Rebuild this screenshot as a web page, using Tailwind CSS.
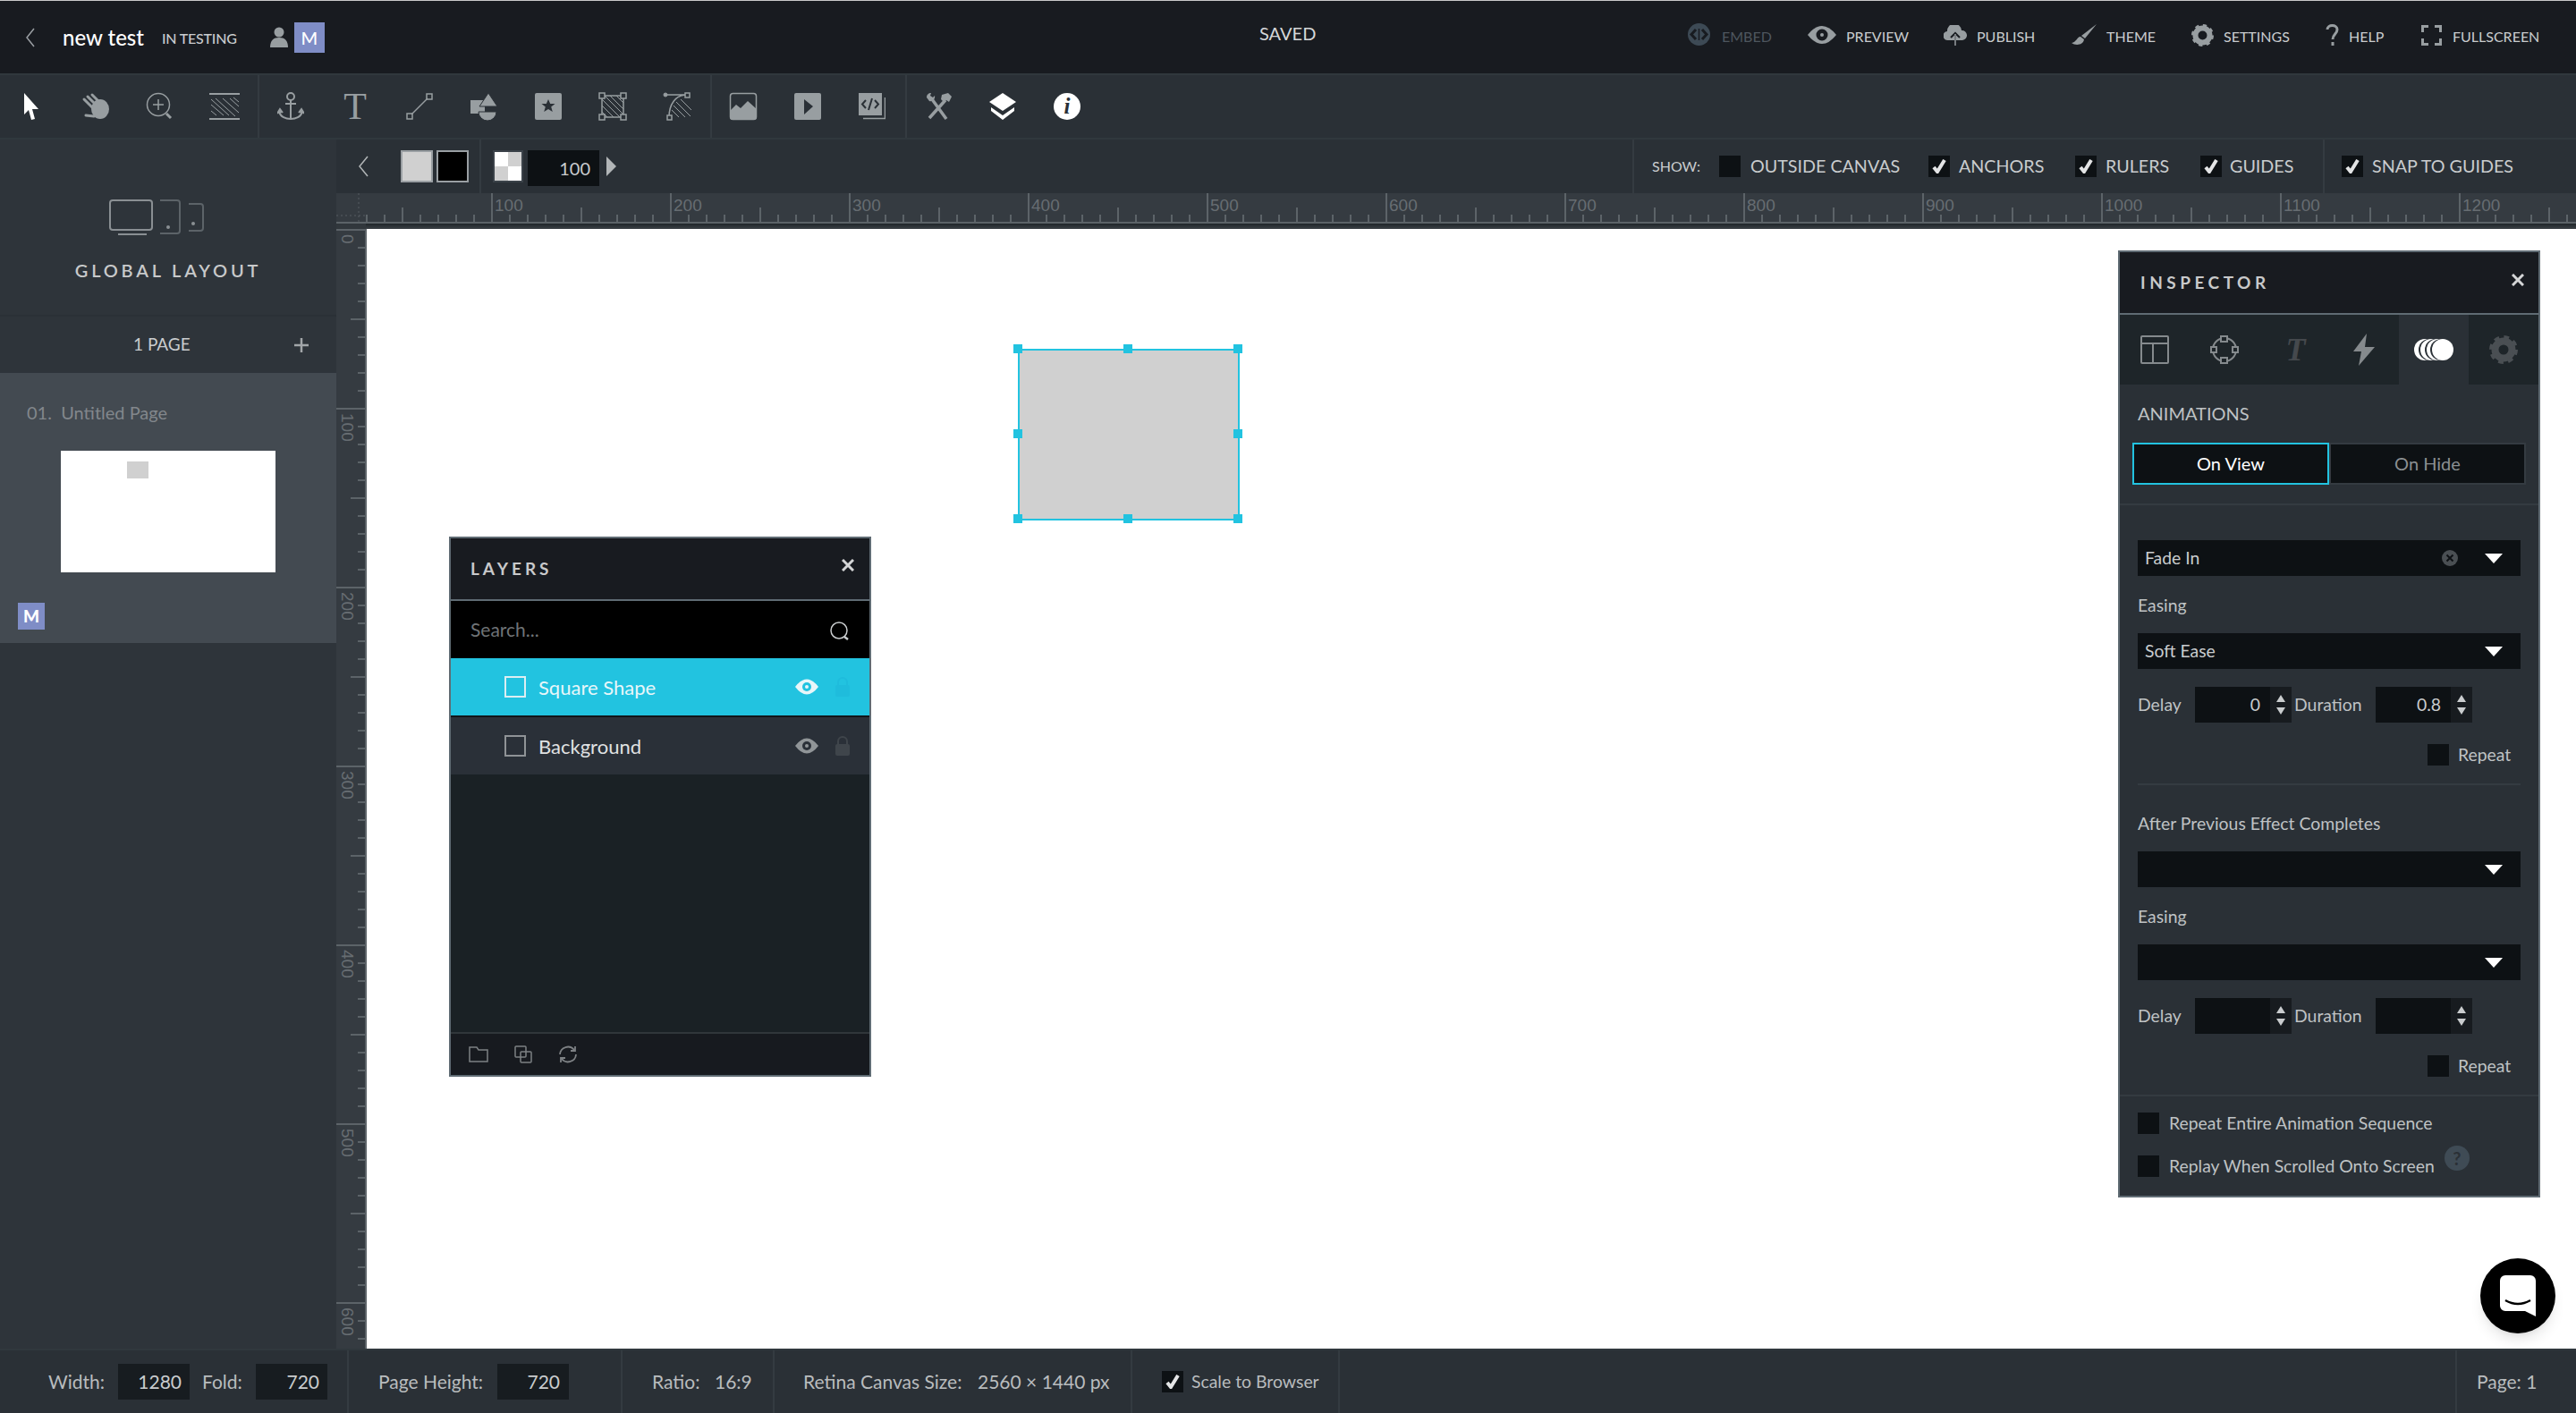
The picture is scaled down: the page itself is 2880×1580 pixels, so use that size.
<!DOCTYPE html>
<html lang="en">
<head>
  <meta charset="UTF-8">
  <title>new test</title>
  <script src="https://cdn.jsdelivr.net/npm/@tailwindcss/browser@4"></script>
</head>
<body class="bg-white">
<div class="flex h-[1580px] w-[2880px] flex-col overflow-hidden [font-family:Lato,sans-serif] text-[#c9ccce]">

  <!-- top bar -->
  <header class="flex h-[84px] shrink-0 items-center border-t border-b-2 border-t-[#c9c9c9] border-b-[#30383d] bg-[#181b20]">
    <div class="flex w-[1408px] items-center">
      <svg class="ml-[28px] h-[24px] w-[12px]" viewBox="0 0 12 24" fill="none" stroke="#9a9fa3" stroke-width="1.5"><path d="M10 2 2 12l8 10"/></svg>
      <span class="ml-[30px] text-[24px] font-medium text-white">new test</span>
      <span class="ml-[20px] mt-[3px] text-[16px] font-medium tracking-[-0.2px] text-[#c9ccce]">IN TESTING</span>
      <svg class="ml-[37px] h-[24px] w-[20px]" viewBox="0 0 20 24" fill="#989ea1"><circle cx="10" cy="6" r="5.5"/><path d="M0 23c0-8 4-11 10-11s10 3 10 11z"/></svg>
      <span class="ml-[7px] flex h-[34px] w-[34px] items-center justify-center bg-[#7f8dc6] text-[20px] font-medium text-white">M</span>
    </div>
    <div class="mb-[9px] w-[479px] text-[20px] text-[#d5d7d8]">SAVED</div>
    <div class="mb-[2px] flex items-center text-[16px]">
      <div class="flex w-[134px] items-center text-[#4e565e]">
        <svg class="mb-[5px] mr-[13px] h-[25px] w-[25px]" viewBox="0 0 25 25"><circle cx="12.5" cy="12.5" r="12.5" fill="#3d4a55"/><path d="M9 7 4 12.5 9 18M16 7l5 5.5-5 5.5" fill="none" stroke="#181b20" stroke-width="3"/><path d="M12.5 6v13" stroke="#181b20" stroke-width="1.5"/></svg>
        <span>EMBED</span>
      </div>
      <div class="flex w-[152px] items-center">
        <svg class="mb-[3px] mr-[11px] h-[20px] w-[32px]" viewBox="0 0 32 20"><path d="M0 10Q16-10 32 10 16 30 0 10z" fill="#989ea1"/><circle cx="16" cy="10" r="6.5" fill="#181b20"/><circle cx="16" cy="10" r="2" fill="#989ea1"/></svg>
        <span>PREVIEW</span>
      </div>
      <div class="flex w-[142px] items-center">
        <svg class="mb-[3px] mr-[11px] h-[23px] w-[26px]" viewBox="0 0 26 23"><path d="M5 17a5 5 0 0 1-1-10 8 8 0 0 1 16-1 5.500 5.500 0 0 1 1 11z" fill="#989ea1"/><path d="M13 23V10M8 14l5-5 5 5" fill="none" stroke="#181b20" stroke-width="2"/><path d="M13 23V10" stroke="#989ea1" stroke-width="1.500"/></svg>
        <span>PUBLISH</span>
      </div>
      <div class="flex w-[135px] items-center">
        <svg class="mb-[3px] mr-[10px] h-[24px] w-[30px]" viewBox="0 0 30 24" fill="#989ea1"><path d="M29 0 12 13l4 3z"/><path d="M11 14c-4 0-4 6-10 7 4 3 13 3 14-4z"/></svg>
        <span>THEME</span>
      </div>
      <div class="flex w-[150px] items-center">
        <svg class="mb-[3px] mr-[11px] h-[25px] w-[25px]" viewBox="0 0 25 25"><circle cx="12.500" cy="12.500" r="8" fill="none" stroke="#989ea1" stroke-width="6"/><circle cx="12.500" cy="12.500" r="10.500" fill="none" stroke="#989ea1" stroke-width="4" stroke-dasharray="4 4.250"/></svg>
        <span>SETTINGS</span>
      </div>
      <div class="flex w-[107px] items-center">
        <svg class="mb-[3px] mr-[11px] h-[24px] w-[15px]" viewBox="0 0 15 24" fill="none" stroke="#989ea1" stroke-width="3"><path d="M2 6c0-6 11-6 11 0 0 5-5 5-5 11"/><path d="M8 20v4"/></svg>
        <span>HELP</span>
      </div>
      <div class="flex items-center">
        <svg class="mb-[3px] mr-[12px] h-[23px] w-[23px]" viewBox="0 0 23 23" fill="none" stroke="#989ea1" stroke-width="3"><path d="M1.500 8V1.500H8M15 1.500h6.500V8M21.500 15v6.500H15M8 21.500H1.500V15"/></svg>
        <span>FULLSCREEN</span>
      </div>
    </div>
  </header>

  <!-- tools -->
  <div class="flex h-[72px] shrink-0 border-b-2 border-[#30383d] bg-[#2a3036]">
    <div class="flex items-center border-r-2 border-[#343b41] [&>div]:pr-[2px]">
      <div class="flex w-[72px] justify-center"><svg class="h-[32px] w-[20px]" viewBox="0 0 20 32" fill="#fff"><path d="M2 1 18 19h-7l3 11-4 1-3-11-5 5z"/></svg></div>
      <div class="flex w-[72px] justify-center"><svg class="h-[32px] w-[32px]" viewBox="0 0 32 32" fill="#989ea1" stroke="#989ea1"><ellipse cx="21" cy="19" rx="10" ry="11" stroke="none"/><path d="M3 8l9 9M7 5l9 9M12 3l8 8M5 26l9 1" stroke-width="3" stroke-linecap="round"/></svg></div>
      <div class="flex w-[72px] justify-center"><svg class="h-[32px] w-[32px]" viewBox="0 0 32 32" fill="none" stroke="#989ea1"><circle cx="14" cy="14" r="12.500" stroke-width="1.500"/><path d="M14 8v12M8 14h12" stroke-width="1.500"/><path d="M23 24l5 5" stroke-width="3"/></svg></div>
      <div class="flex w-[72px] justify-center"><svg class="h-[32px] w-[36px]" viewBox="0 0 36 32" fill="none" stroke="#989ea1"><path d="M1 2h34M1 30h34" stroke-width="2"/><path d="M3 8l20 18M8 7l22 20M16 7l18 16M24 7l10 9M28 6l6 5M3 14l14 12M3 21l6 5" stroke-width="1"/></svg></div>
    </div>
    <div class="flex items-center border-r-2 border-[#343b41] [&>div]:pr-[2px]">
      <div class="flex w-[72px] justify-center"><svg class="h-[32px] w-[30px]" viewBox="0 0 30 32" fill="none" stroke="#989ea1" stroke-width="2"><circle cx="15" cy="5" r="4"/><path d="M15 9v21M9 13h12M2 21c1 7 8 9 13 9s12-2 13-9"/><path d="M0 24l3-5 3 4M24 23l3-4 3 5" fill="#989ea1"/></svg></div>
      <div class="flex w-[72px] justify-center"><span class="text-[42px] leading-[32px] text-[#989ea1] [font-family:'Liberation_Serif',serif]">T</span></div>
      <div class="flex w-[72px] justify-center"><svg class="h-[32px] w-[32px]" viewBox="0 0 32 32" fill="none" stroke="#989ea1" stroke-width="1.500"><path d="M7 25 25 7"/><rect x="2" y="24" width="6" height="6"/><rect x="24" y="2" width="6" height="6"/></svg></div>
      <div class="flex w-[72px] justify-center"><svg class="h-[32px] w-[32px]" viewBox="0 0 32 32"><rect x="1" y="9" width="16" height="15" fill="#989ea1"/><path d="M10 22a10 10 0 0 0 20 0z" fill="#989ea1" stroke="#2a3036"/><path d="M21 1l10 15H11z" fill="#989ea1" stroke="#2a3036"/></svg></div>
      <div class="flex w-[72px] justify-center"><svg class="h-[32px] w-[30px]" viewBox="0 0 30 32"><rect y="1" width="30" height="30" rx="2" fill="#989ea1"/><path d="M15 8l2.200 5h5.300l-4.300 3.500 1.600 5.500-4.800-3-4.800 3 1.600-5.500-4.300-3.500h5.300z" fill="#2a3036"/></svg></div>
      <div class="flex w-[72px] justify-center"><svg class="h-[32px] w-[32px]" viewBox="0 0 32 32" fill="none" stroke="#989ea1"><rect x="4" y="4" width="24" height="24" stroke-width="1.500"/><path d="M7 4l21 21M13 4l15 15M20 4l8 8M4 8l20 20M4 15l13 13M4 22l6 6"/><g fill="#2a3036" stroke-width="1.500"><rect x="1" y="1" width="6" height="6"/><rect x="25" y="1" width="6" height="6"/><rect x="1" y="25" width="6" height="6"/><rect x="25" y="25" width="6" height="6"/></g></svg></div>
      <div class="flex w-[72px] justify-center"><svg class="h-[32px] w-[32px]" viewBox="0 0 32 32" fill="none" stroke="#989ea1"><path d="M3 3h24M7 28C7 14 14 3 27 3" stroke-width="1.500"/><path d="M20 8l12 12M15 11l16 16M12 15l13 13M10 20l8 8" /><circle cx="3" cy="3" r="2" fill="#989ea1"/><rect x="25" y="1" width="5" height="5" fill="#2a3036" stroke-width="1.500"/><rect x="5" y="26" width="5" height="5" fill="#2a3036" stroke-width="1.500"/></svg></div>
    </div>
    <div class="flex items-center border-r-2 border-[#343b41] [&>div]:pr-[2px]">
      <div class="flex w-[72px] justify-center"><svg class="h-[32px] w-[32px]" viewBox="0 0 32 32"><rect x="1.500" y="1.500" width="29" height="29" rx="3" fill="none" stroke="#989ea1" stroke-width="1.500"/><path d="M1 21l7-7 5 4 8-8 10 9v9a3 3 0 0 1-3 3H4a3 3 0 0 1-3-3z" fill="#989ea1"/></svg></div>
      <div class="flex w-[72px] justify-center"><svg class="h-[32px] w-[30px]" viewBox="0 0 30 32"><rect y="1" width="30" height="30" rx="2" fill="#989ea1"/><path d="M11 8l10 8-10 9z" fill="#2a3036"/></svg></div>
      <div class="flex w-[72px] justify-center"><svg class="h-[32px] w-[30px]" viewBox="0 0 30 32"><path d="M5 29.500h24.500V6" fill="none" stroke="#989ea1" stroke-width="1.500"/><rect y="1" width="26" height="25" fill="#989ea1"/><path d="M8 9l-4 4.500 4 4.500M18 9l4 4.500-4 4.500M15 7l-4 13" fill="none" stroke="#2a3036" stroke-width="2"/></svg></div>
    </div>
    <div class="flex items-center [&>div]:pr-[2px]">
      <div class="flex w-[72px] justify-center"><svg class="h-[32px] w-[32px]" viewBox="0 0 32 32" fill="#989ea1" stroke="#989ea1"><path d="M9 8l16 22M24 9 6 29" stroke-width="3.500" fill="none"/><path d="M3 6c0-3 2-5 5-5l-1 3 3 2 2-2c1 4-3 7-6 6z" stroke="none"/><path d="M20 3l7-2 4 4-3 6-3-2-3 2-3-3z" stroke="none"/></svg></div>
      <div class="flex w-[72px] justify-center"><svg class="h-[32px] w-[32px]" viewBox="0 0 32 32" fill="#fff"><path d="M16 1 31 11 16 21 1 11z"/><path d="M3 17l13 9 13-9v4L16 31 3 21z"/></svg></div>
      <div class="flex w-[72px] justify-center"><span class="flex h-[30px] w-[30px] items-center justify-center rounded-full bg-white text-[25px] font-bold italic text-[#2a3036] [font-family:'Liberation_Serif',serif]">i</span></div>
    </div>
  </div>

  <div class="flex min-h-0 flex-1">
    <!-- pages sidebar -->
    <aside class="w-[376px] shrink-0 bg-[#2e343a]">
      <div class="flex h-[198px] flex-col items-center border-b-2 border-[#2a3036] pt-[67px]">
        <svg class="ml-[-26px] h-[42px] w-[106px]" viewBox="0 0 106 42" fill="none"><rect x="1" y="1" width="47" height="33" rx="3" stroke="#8a8f93" stroke-width="2"/><path d="M10 39h32" stroke="#8a8f93" stroke-width="2"/><path d="M57 1h19a3 3 0 0 1 3 3v31a3 3 0 0 1-3 3H57" stroke="#5c6368" stroke-width="2"/><circle cx="66" cy="31" r="2" fill="#8a8f93"/><path d="M89 5h13a3 3 0 0 1 3 3v24a3 3 0 0 1-3 3H89" stroke="#5c6368" stroke-width="2"/><circle cx="94" cy="27" r="2" fill="#8a8f93"/></svg>
        <div class="mt-[25px] text-[20px] font-semibold leading-[24px] tracking-[3.800px] text-[#c8c9ca]">GLOBAL LAYOUT</div>
      </div>
      <div class="flex h-[63px] items-center">
        <span class="ml-[149px] text-[19px] text-[#c9ccce]">1 PAGE</span>
        <svg class="ml-[116px] h-[16px] w-[16px]" viewBox="0 0 16 16" stroke="#a2a6a9" stroke-width="2.500"><path d="M8 0v16M0 8h16"/></svg>
      </div>
      <div class="h-[302px] bg-[#434a51] pt-[32px]">
        <div class="ml-[30px] text-[20px] leading-[24px] text-[#82878c]">01.&nbsp; Untitled Page</div>
        <div class="ml-[68px] mt-[31px] h-[136px] w-[240px] bg-white pl-[74px] pt-[12px]"><div class="h-[19px] w-[24px] bg-[#d0d0d0]"></div></div>
        <div class="ml-[20px] mt-[34px] flex h-[30px] w-[30px] items-center justify-center bg-[#7f8dc6] text-[19px] font-black text-white">M</div>
      </div>
    </aside>

    <div class="flex min-w-0 flex-1 flex-col">
      <!-- sub toolbar -->
      <div class="flex h-[60px] shrink-0 items-center bg-[#2a3036] text-[19.700px]">
        <div class="flex h-full w-[162px] items-center border-r-2 border-[#343b41]">
          <svg class="ml-[24px] h-[24px] w-[12px]" viewBox="0 0 12 24" fill="none" stroke="#b2b6b8" stroke-width="1.500"><path d="M11 1 2 12l9 11"/></svg>
          <div class="ml-[36px] h-[36px] w-[36px] border-2 border-[#9a9fa3] bg-[#d0d0d0]"></div>
          <div class="ml-[4px] h-[36px] w-[36px] border-2 border-[#9a9fa3] bg-black"></div>
        </div>
        <div class="ml-[13px] grid h-[36px] w-[34px] grid-cols-2 grid-rows-2 border-2 border-[#3b4249]">
          <div class="bg-white"></div><div class="bg-[#d0d0d0]"></div><div class="bg-[#d0d0d0]"></div><div class="bg-white"></div>
        </div>
        <div class="ml-[5px] mt-[4px] flex h-[40px] w-[80px] items-center justify-end bg-[#0d1114] pr-[10px] text-[20px] text-[#c9ccce]">100</div>
        <svg class="ml-[8px] h-[22px] w-[11px]" viewBox="0 0 11 22" fill="#b2b6b8"><path d="M0 0l11 11L0 22z"/></svg>
        <div class="ml-[1136px] flex h-full w-[772px] items-center border-l-2 border-[#343b41] pl-[20px]">
          <span class="w-[75px] text-[16px]">SHOW:</span>
          <div class="flex w-[234px] items-center gap-[11px]"><span class="h-[24px] w-[24px] bg-[#0d1114]"></span><span>OUTSIDE CANVAS</span></div>
          <div class="flex w-[164px] items-center gap-[10px]"><span class="flex h-[24px] w-[24px] items-center justify-center bg-[#0d1114]"><svg class="h-[16px] w-[16px]" viewBox="0 0 16 16" fill="none" stroke="#e3e4e5" stroke-width="4"><path d="M2 9l4 5 8-13"/></svg></span><span>ANCHORS</span></div>
          <div class="flex w-[140px] items-center gap-[10px]"><span class="flex h-[24px] w-[24px] items-center justify-center bg-[#0d1114]"><svg class="h-[16px] w-[16px]" viewBox="0 0 16 16" fill="none" stroke="#e3e4e5" stroke-width="4"><path d="M2 9l4 5 8-13"/></svg></span><span>RULERS</span></div>
          <div class="flex items-center gap-[9px]"><span class="flex h-[24px] w-[24px] items-center justify-center bg-[#0d1114]"><svg class="h-[16px] w-[16px]" viewBox="0 0 16 16" fill="none" stroke="#e3e4e5" stroke-width="4"><path d="M2 9l4 5 8-13"/></svg></span><span>GUIDES</span></div>
        </div>
        <div class="flex h-full flex-1 items-center gap-[10px] border-l-2 border-[#343b41] pl-[19px]"><span class="flex h-[24px] w-[24px] items-center justify-center bg-[#0d1114]"><svg class="h-[16px] w-[16px]" viewBox="0 0 16 16" fill="none" stroke="#e3e4e5" stroke-width="4"><path d="M2 9l4 5 8-13"/></svg></span><span>SNAP TO GUIDES</span></div>
      </div>

      <!-- top ruler -->
      <svg class="block h-[34px] w-[2504px] shrink-0" viewBox="0 0 2504 34" font-family="Liberation Sans" font-size="19" fill="#676d72">
        <defs>
          <pattern id="hticks" width="200" height="34" patternUnits="userSpaceOnUse" patternTransform="translate(173 0)">
            <path d="M1 0v34M21 24v10M41 24v10M61 24v10M81 24v10M101 16v18M121 24v10M141 24v10M161 24v10M181 24v10" stroke="#5c6368" stroke-width="2"/>
          </pattern>
        </defs>
        <rect width="2504" height="34" fill="#353b41"/>
        <rect x="33" width="2471" height="34" fill="url(#hticks)"/>
        <path d="M0 33h2504" stroke="#5c6368" stroke-width="2"/>
        <path d="M0 25h32M25 0v32" stroke="#565d62" stroke-width="1" stroke-dasharray="2 3"/>
        <text x="177" y="20">100</text><text x="377" y="20">200</text><text x="577" y="20">300</text><text x="777" y="20">400</text><text x="977" y="20">500</text><text x="1177" y="20">600</text><text x="1377" y="20">700</text><text x="1577" y="20">800</text><text x="1777" y="20">900</text><text x="1977" y="20">1000</text><text x="2177" y="20">1100</text><text x="2377" y="20">1200</text>
      </svg>
      <div class="flex h-[6px] shrink-0 bg-linear-to-b from-[#20262a] to-[#3a4045]"><div class="w-[33px] bg-[#31373c]"></div></div>

      <div class="flex min-h-0 flex-1">
        <!-- left ruler -->
        <svg class="block h-[1252px] w-[34px] shrink-0" viewBox="0 0 34 1252" font-family="Liberation Sans" font-size="19" fill="#676d72">
          <defs>
            <pattern id="vticks" width="34" height="200" patternUnits="userSpaceOnUse">
              <path d="M0 1h33M24 21h9M24 41h9M24 61h9M24 81h9M16 101h17M24 121h9M24 141h9M24 161h9M24 181h9" stroke="#5c6368" stroke-width="2"/>
            </pattern>
          </defs>
          <rect width="34" height="1252" fill="#353b41"/>
          <rect width="34" height="1252" fill="url(#vticks)"/>
          <path d="M33 0v1252" stroke="#5c6368" stroke-width="2"/>
          <text transform="translate(6 6) rotate(90)">0</text><text transform="translate(6 206) rotate(90)">100</text><text transform="translate(6 406) rotate(90)">200</text><text transform="translate(6 606) rotate(90)">300</text><text transform="translate(6 806) rotate(90)">400</text><text transform="translate(6 1006) rotate(90)">500</text><text transform="translate(6 1206) rotate(90)">600</text>
        </svg>

        <!-- canvas -->
        <main class="relative min-w-0 flex-1 bg-white">
          <!-- selected shape -->
          <div class="absolute left-[728px] top-[134px] h-[192px] w-[248px] border-2 border-[#22c3e0] bg-[#d0d0d0]">
            <span class="absolute left-[-7px] top-[-7px] h-[10px] w-[10px] bg-[#22c3e0]"></span>
            <span class="absolute left-[116px] top-[-7px] h-[10px] w-[10px] bg-[#22c3e0]"></span>
            <span class="absolute right-[-5px] top-[-7px] h-[10px] w-[10px] bg-[#22c3e0]"></span>
            <span class="absolute left-[-7px] top-[88px] h-[10px] w-[10px] bg-[#22c3e0]"></span>
            <span class="absolute right-[-5px] top-[88px] h-[10px] w-[10px] bg-[#22c3e0]"></span>
            <span class="absolute bottom-[-5px] left-[-7px] h-[10px] w-[10px] bg-[#22c3e0]"></span>
            <span class="absolute bottom-[-5px] left-[116px] h-[10px] w-[10px] bg-[#22c3e0]"></span>
            <span class="absolute bottom-[-5px] right-[-5px] h-[10px] w-[10px] bg-[#22c3e0]"></span>
          </div>

          <!-- layers window -->
          <section class="absolute left-[92px] top-[344px] flex h-[604px] w-[472px] flex-col border-2 border-[#5f6b73] bg-[#1a2125]">
            <div class="flex h-[70px] shrink-0 items-center justify-between border-b-2 border-[#5f6b73] bg-[#181b20] pl-[22px] pr-[17px]">
              <span class="text-[19px] font-bold tracking-[4px] text-[#c8c9ca]">LAYERS</span>
              <svg class="mb-[8px] h-[14px] w-[14px]" viewBox="0 0 14 14" stroke="#d4d5d6" stroke-width="3"><path d="M1 1l12 12M13 1 1 13"/></svg>
            </div>
            <div class="flex h-[64px] shrink-0 items-center justify-between bg-black pl-[22px] pr-[22px]">
              <span class="text-[21px] text-[#6f7376]">Search...</span>
              <svg class="mt-[4px] h-[22px] w-[22px]" viewBox="0 0 22 22" fill="none" stroke="#c9ccce" stroke-width="1.500"><circle cx="10" cy="10" r="9"/><path d="M16 17l4 3" stroke-width="2.500"/></svg>
            </div>
            <div class="flex h-[64px] shrink-0 items-center bg-[#22c3e0]">
              <span class="ml-[60px] h-[24px] w-[24px] border-2 border-[#dceef2]"></span>
              <span class="ml-[14px] w-[287px] text-[22px] text-[#e8f6f9]">Square Shape</span>
              <svg class="h-[18px] w-[26px]" viewBox="0 0 26 18"><path d="M0 9Q13-8 26 9 13 26 0 9z" fill="#e8f6f9"/><circle cx="13" cy="9" r="5" fill="#22c3e0"/><circle cx="13" cy="9" r="2" fill="#e8f6f9"/></svg>
              <svg class="ml-[19px] h-[22px] w-[16px]" viewBox="0 0 16 22" fill="#1fbcdc"><rect y="9" width="16" height="13" rx="2"/><path d="M3 10V6a5 5 0 0 1 10 0v4" fill="none" stroke="#1fbcdc" stroke-width="2"/></svg>
            </div>
            <div class="h-[2px] shrink-0 bg-[#10151a]"></div>
            <div class="flex h-[64px] shrink-0 items-center bg-[#2a3038]">
              <span class="ml-[60px] h-[24px] w-[24px] border-2 border-[#8f9396]"></span>
              <span class="ml-[14px] w-[287px] text-[22px] text-[#e0e2e3]">Background</span>
              <svg class="h-[18px] w-[26px]" viewBox="0 0 26 18"><path d="M0 9Q13-8 26 9 13 26 0 9z" fill="#909598"/><circle cx="13" cy="9" r="5" fill="#2a3038"/><circle cx="13" cy="9" r="2" fill="#909598"/></svg>
              <svg class="ml-[19px] h-[22px] w-[16px]" viewBox="0 0 16 22" fill="#3f454b"><rect y="9" width="16" height="13" rx="2"/><path d="M3 10V6a5 5 0 0 1 10 0v4" fill="none" stroke="#3f454b" stroke-width="2"/></svg>
            </div>
            <div class="flex-1"></div>
            <div class="flex h-[48px] shrink-0 items-center gap-[29px] border-t-2 border-[#30363a] bg-[#171a1f] pl-[20px]">
              <svg class="h-[18px] w-[22px]" viewBox="0 0 22 18" fill="none" stroke="#7d8184" stroke-width="1.500"><path d="M1 16.500V1h8l2 3h10v13H1z"/></svg>
              <svg class="h-[20px] w-[20px]" viewBox="0 0 20 20" fill="none" stroke="#7d8184" stroke-width="1.500"><rect x="1" y="1" width="12" height="12" rx="1"/><rect x="7" y="7" width="12" height="12" rx="1"/></svg>
              <svg class="h-[20px] w-[22px]" viewBox="0 0 22 20" fill="none" stroke="#7d8184" stroke-width="1.800"><path d="M2 10a9 9 0 0 1 16-5M20 10a9 9 0 0 1-16 5"/><path d="M19 1v5h-5M3 19v-5h5"/></svg>
            </div>
          </section>

          <!-- inspector window -->
          <section class="absolute left-[1958px] top-[24px] h-[1059px] w-[472px] border-2 border-[#5f6b73] bg-[#2a3036] text-[19.400px] text-[#bfc2c4]">
            <div class="flex h-[70px] items-center justify-between border-b-2 border-[#5f6b73] bg-[#181b20] pl-[23px] pr-[16px]">
              <span class="text-[19px] font-bold tracking-[4.500px] text-[#c8c9ca]">INSPECTOR</span>
              <svg class="mb-[6px] h-[14px] w-[14px]" viewBox="0 0 14 14" stroke="#d4d5d6" stroke-width="3"><path d="M1 1l12 12M13 1 1 13"/></svg>
            </div>
            <div class="flex h-[78px] items-center bg-[#1e2529]">
              <div class="flex w-[78px] justify-center"><svg class="h-[32px] w-[32px]" viewBox="0 0 32 32" fill="none" stroke="#858a8d" stroke-width="2"><rect x="1" y="1" width="30" height="30" rx="1"/><path d="M1 9h30M14 9v22"/></svg></div>
              <div class="flex w-[78px] justify-center"><svg class="h-[32px] w-[32px]" viewBox="0 0 32 32" fill="none" stroke="#858a8d" stroke-width="2"><circle cx="16" cy="16" r="13"/><g fill="#1e2529"><rect x="12" y="1" width="7" height="6"/><rect x="12" y="25" width="7" height="6"/><rect x="1" y="13" width="6" height="6"/><rect x="25" y="13" width="6" height="6"/></g></svg></div>
              <div class="flex w-[78px] justify-center"><span class="pl-[3px] text-[36px] font-bold italic leading-[32px] text-[#45494d] [font-family:'Liberation_Serif',serif]">T</span></div>
              <div class="flex w-[78px] justify-center"><svg class="h-[36px] w-[24px]" viewBox="0 0 24 36" fill="#858a8d"><path d="M15 0 0 20h9l-3 16 18-21H13z"/></svg></div>
              <div class="flex h-full w-[78px] items-center justify-center bg-[#2a3036]"><svg class="h-[24px] w-[44px]" viewBox="0 0 44 24"><circle cx="12" cy="12" r="12" fill="#fff"/><circle cx="17" cy="12" r="12" fill="#2a3036"/><circle cx="19" cy="12" r="12" fill="#fff"/><circle cx="24" cy="12" r="12" fill="#2a3036"/><circle cx="26" cy="12" r="12" fill="#fff"/><circle cx="30" cy="12" r="12" fill="#2a3036"/><circle cx="32" cy="12" r="12" fill="#fff"/></svg></div>
              <div class="flex w-[78px] justify-center"><svg class="h-[32px] w-[32px]" viewBox="0 0 32 32"><circle cx="16" cy="16" r="9.500" fill="none" stroke="#4a4f53" stroke-width="8"/><circle cx="16" cy="16" r="13.500" fill="none" stroke="#4a4f53" stroke-width="5" stroke-dasharray="5.500 5.100"/></svg></div>
            </div>
            <div class="ml-[20px] mt-[20px] h-[24px] leading-[24px] text-[20px]">ANIMATIONS</div>
            <div class="ml-[14px] mt-[21px] flex h-[47px] w-[440px]">
              <div class="flex w-[220px] items-center justify-center border-2 border-[#22c3e0] bg-[#0d1114] pb-[2px] text-[20px] text-white">On View</div>
              <div class="flex w-[220px] items-center justify-center border-2 border-[#343b41] bg-[#0d1114] pb-[2px] text-[20px] text-[#8b8f92]">On Hide</div>
            </div>
            <div class="mt-[21px] h-[2px] bg-[#343b41]"></div>
            <div class="ml-[20px] mt-[39px] flex h-[40px] w-[428px] items-center bg-[#0d1114] pl-[8px] pr-[20px] text-[#c9ccce]">
              <span class="flex-1">Fade In</span>
              <svg class="mr-[30px] h-[18px] w-[18px]" viewBox="0 0 18 18"><circle cx="9" cy="9" r="9" fill="#4a4f53"/><path d="M5.500 5.500l7 7M12.500 5.500l-7 7" stroke="#0d1114" stroke-width="2"/></svg>
              <svg class="h-[11px] w-[20px]" viewBox="0 0 20 11" fill="#fff"><path d="M0 0h20L10 11z"/></svg>
            </div>
            <div class="ml-[20px] mt-[21px] h-[24px] leading-[24px]">Easing</div>
            <div class="ml-[20px] mt-[19px] flex h-[40px] w-[428px] items-center bg-[#0d1114] pl-[8px] pr-[20px] text-[#c9ccce]">
              <span class="flex-1">Soft Ease</span>
              <svg class="h-[11px] w-[20px]" viewBox="0 0 20 11" fill="#fff"><path d="M0 0h20L10 11z"/></svg>
            </div>
            <div class="ml-[20px] mt-[20px] flex h-[40px] items-center">
              <span class="w-[64px]">Delay</span>
              <div class="flex h-full w-[108px] bg-[#0d1114]"><span class="flex w-[84px] items-center justify-end pr-[11px] text-[#c9ccce]">0</span><span class="flex w-[24px] flex-col items-center justify-center gap-[6px] bg-[#171b1f]"><svg class="h-[8px] w-[10px]" viewBox="0 0 10 8" fill="#c9ccce"><path d="M5 0l5 8H0z"/></svg><svg class="h-[8px] w-[10px]" viewBox="0 0 10 8" fill="#c9ccce"><path d="M0 0h10L5 8z"/></svg></span></div>
              <span class="ml-[3px] w-[91px]">Duration</span>
              <div class="flex h-full w-[108px] bg-[#0d1114]"><span class="flex w-[84px] items-center justify-end pr-[11px] text-[#c9ccce]">0.8</span><span class="flex w-[24px] flex-col items-center justify-center gap-[6px] bg-[#171b1f]"><svg class="h-[8px] w-[10px]" viewBox="0 0 10 8" fill="#c9ccce"><path d="M5 0l5 8H0z"/></svg><svg class="h-[8px] w-[10px]" viewBox="0 0 10 8" fill="#c9ccce"><path d="M0 0h10L5 8z"/></svg></span></div>
            </div>
            <div class="ml-[344px] mt-[24px] flex h-[24px] items-center gap-[10px]"><span class="h-[24px] w-[24px] bg-[#0d1114]"></span><span>Repeat</span></div>
            <div class="ml-[20px] mt-[20px] h-[2px] w-[428px] bg-[#343b41]"></div>
            <div class="ml-[20px] mt-[31px] h-[24px] leading-[24px]">After Previous Effect Completes</div>
            <div class="ml-[20px] mt-[19px] flex h-[40px] w-[428px] items-center justify-end bg-[#0d1114] pr-[20px]"><svg class="h-[11px] w-[20px]" viewBox="0 0 20 11" fill="#fff"><path d="M0 0h20L10 11z"/></svg></div>
            <div class="ml-[20px] mt-[21px] h-[24px] leading-[24px]">Easing</div>
            <div class="ml-[20px] mt-[19px] flex h-[40px] w-[428px] items-center justify-end bg-[#0d1114] pr-[20px]"><svg class="h-[11px] w-[20px]" viewBox="0 0 20 11" fill="#fff"><path d="M0 0h20L10 11z"/></svg></div>
            <div class="ml-[20px] mt-[20px] flex h-[40px] items-center">
              <span class="w-[64px]">Delay</span>
              <div class="flex h-full w-[108px] bg-[#0d1114]"><span class="w-[84px]"></span><span class="flex w-[24px] flex-col items-center justify-center gap-[6px] bg-[#171b1f]"><svg class="h-[8px] w-[10px]" viewBox="0 0 10 8" fill="#c9ccce"><path d="M5 0l5 8H0z"/></svg><svg class="h-[8px] w-[10px]" viewBox="0 0 10 8" fill="#c9ccce"><path d="M0 0h10L5 8z"/></svg></span></div>
              <span class="ml-[3px] w-[91px]">Duration</span>
              <div class="flex h-full w-[108px] bg-[#0d1114]"><span class="w-[84px]"></span><span class="flex w-[24px] flex-col items-center justify-center gap-[6px] bg-[#171b1f]"><svg class="h-[8px] w-[10px]" viewBox="0 0 10 8" fill="#c9ccce"><path d="M5 0l5 8H0z"/></svg><svg class="h-[8px] w-[10px]" viewBox="0 0 10 8" fill="#c9ccce"><path d="M0 0h10L5 8z"/></svg></span></div>
            </div>
            <div class="ml-[344px] mt-[24px] flex h-[24px] items-center gap-[10px]"><span class="h-[24px] w-[24px] bg-[#0d1114]"></span><span>Repeat</span></div>
            <div class="mt-[20px] h-[2px] bg-[#343b41]"></div>
            <div class="ml-[20px] mt-[18px] flex h-[24px] items-center gap-[11px]"><span class="h-[24px] w-[24px] bg-[#0d1114]"></span><span>Repeat Entire Animation Sequence</span></div>
            <div class="ml-[20px] mt-[24px] flex h-[24px] items-center gap-[11px]"><span class="h-[24px] w-[24px] bg-[#0d1114]"></span><span>Replay When Scrolled Onto Screen</span><span class="mb-[18px] flex h-[28px] w-[28px] items-center justify-center rounded-full bg-[#3f4b55] text-[20px] font-bold text-[#2a3036]">?</span></div>
          </section>

          <!-- chat launcher -->
          <div class="absolute left-[2363px] top-[1151px] flex h-[84px] w-[84px] items-center justify-center rounded-full bg-black shadow-lg">
            <svg class="h-[46px] w-[40px]" viewBox="0 0 40 46"><path d="M6 0h28a6 6 0 0 1 6 6v40l-12-6H6a6 6 0 0 1-6-6V6a6 6 0 0 1 6-6z" fill="#fff"/><path d="M6 28q14 8 28 0" fill="none" stroke="#000" stroke-width="2.500"/></svg>
          </div>
        </main>
      </div>
    </div>
  </div>

  <!-- status bar -->
  <footer class="flex h-[72px] shrink-0 items-center border-t-2 border-[#30383d] bg-[#2a3036] text-[21px] text-[#b9bcbe]">
    <div class="flex h-full w-[390px] items-center border-r-2 border-[#343b41] pl-[54px]">
      <span class="w-[78px]">Width:</span>
      <span class="flex h-[40px] w-[80px] items-center justify-end bg-[#171c20] pr-[9px] text-[#c9ccce]">1280</span>
      <span class="ml-[14px] w-[60px]">Fold:</span>
      <span class="flex h-[40px] w-[80px] items-center justify-end bg-[#171c20] pr-[9px] text-[#c9ccce]">720</span>
    </div>
    <div class="flex h-full w-[306px] items-center border-r-2 border-[#343b41] pl-[33px]">
      <span class="w-[133px]">Page Height:</span>
      <span class="flex h-[40px] w-[80px] items-center justify-end bg-[#171c20] pr-[10px] text-[#c9ccce]">720</span>
    </div>
    <div class="flex h-full w-[170px] items-center border-r-2 border-[#343b41] pl-[33px]">
      <span class="w-[70px]">Ratio:</span><span>16:9</span>
    </div>
    <div class="flex h-full w-[400px] items-center border-r-2 border-[#343b41] pl-[32px]">
      <span class="w-[195px]">Retina Canvas Size:</span><span>2560 × 1440 px</span>
    </div>
    <div class="flex h-full w-[232px] items-center gap-[9px] border-r-2 border-[#343b41] pl-[33px] text-[19.400px]">
      <span class="flex h-[24px] w-[24px] items-center justify-center bg-[#0d1114]"><svg class="h-[16px] w-[16px]" viewBox="0 0 16 16" fill="none" stroke="#e3e4e5" stroke-width="4"><path d="M2 9l4 5 8-13"/></svg></span><span>Scale to Browser</span>
    </div>
    <div class="ml-auto flex h-full w-[135px] items-center border-l-2 border-[#343b41] pl-[22px]">Page: 1</div>
  </footer>
</div>
</body>
</html>
